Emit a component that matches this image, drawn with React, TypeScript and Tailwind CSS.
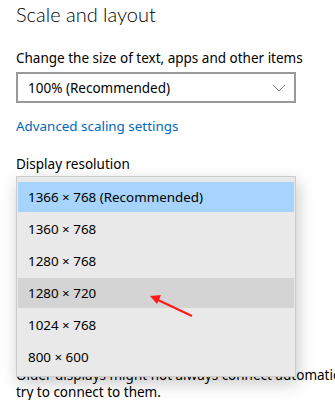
import React from 'react';

const resolutions = [
  '1366 × 768 (Recommended)',
  '1360 × 768',
  '1280 × 768',
  '1280 × 720',
  '1024 × 768',
  '800 × 600',
];

const ChevronDown = () => (
  <svg width="14" height="8" viewBox="0 0 14 8" fill="none">
    <path d="M1 1L7 7L13 1" stroke="#8a8a8a" strokeWidth="1" />
  </svg>
);

export default function App() {
  const selected = 0;
  const hovered = 3;

  return (
    <div
      className="relative w-[335px] h-[400px] overflow-hidden bg-white text-black"
      style={{ fontFamily: '"Noto Sans", "Open Sans", sans-serif' }}
    >
      <div className="pl-4 pt-[1px]">
        <h1 className="text-[20px] leading-[26px] font-light" style={{ fontFamily: 'Lato, "Noto Sans", sans-serif' }}>
          Scale and layout
        </h1>

        <p className="mt-[21px] text-[13.5px] leading-[20px]">Change the size of text, apps and other items</p>

        {/* scale dropdown */}
        <div className="mt-[4px] w-[280px] h-[31px] border-2 border-[#999999] flex items-center justify-between pl-[10px] pr-[8px]">
          <span className="text-[13.5px] leading-[20px]">100% (Recommended)</span>
          <ChevronDown />
        </div>

        <p className="mt-[13px] text-[13.4px] leading-[20px] text-[#0067c0]">Advanced scaling settings</p>

        <p className="mt-[18px] text-[13.5px] leading-[20px]">Display resolution</p>

        {/* text behind the open list */}
        <p className="mt-[193px] whitespace-nowrap text-[13.5px] leading-[17px]">
          Older displays might not always connect automatically. Select Detect to
          <br />
          try to connect to them.
        </p>
      </div>

      {/* open resolution list */}
      <div className="absolute left-4 top-[176px] w-[280px] bg-[#e9e9e9] border border-[#cccccc] shadow-[2px_6px_16px_rgba(0,0,0,0.22)] pt-[5px] pb-[4px] px-[1px]">
        <div className="flex flex-col gap-[2px]">
          {resolutions.map((r, i) => (
            <div
              key={r}
              className={`h-[30px] flex items-center pl-[10px] text-[13.4px] ${
                i === selected ? 'bg-[#a6d4fc]' : i === hovered ? 'bg-[#d4d4d4]' : ''
              }`}
            >
              {r}
            </div>
          ))}
        </div>
      </div>

      {/* red annotation arrow */}
      <svg className="absolute left-0 top-0" width="335" height="400" viewBox="0 0 335 400">
        <line x1="192" y1="316" x2="158" y2="300" stroke="#ff1a1a" strokeWidth="2" />
        <polygon points="150,296 161,295 157,304" fill="#ff1a1a" />
      </svg>
    </div>
  );
}
